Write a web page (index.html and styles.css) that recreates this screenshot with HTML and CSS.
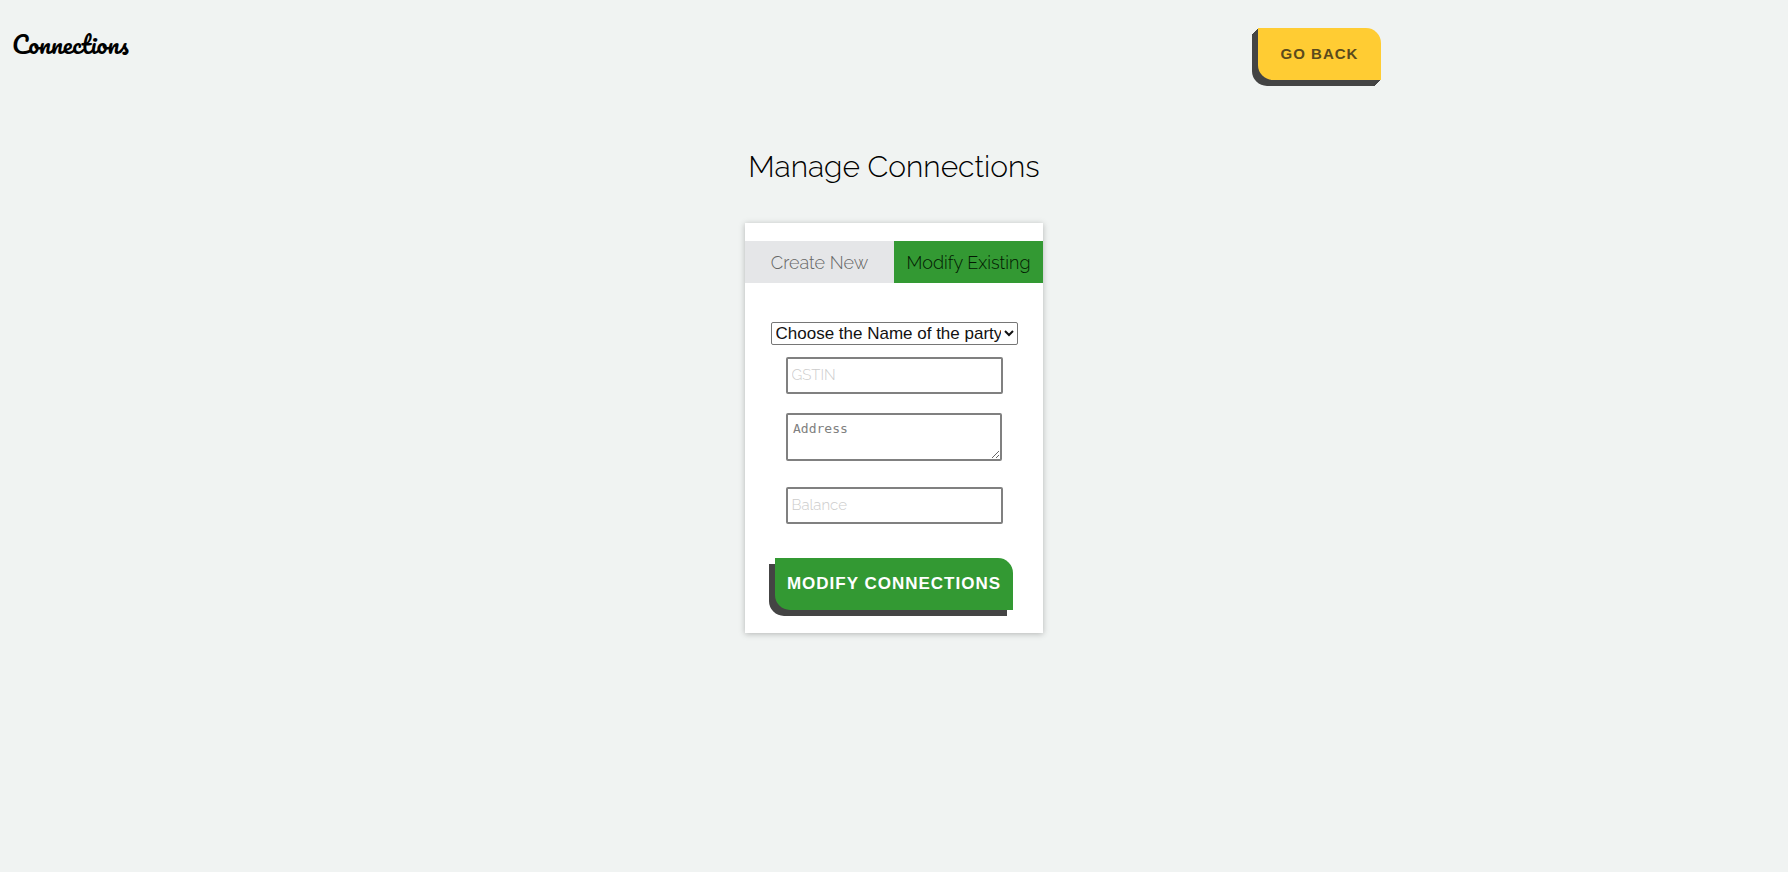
FILE: index.html
```html
<!DOCTYPE html>
<html lang="en">
<head>
<meta charset="utf-8">
<meta name="viewport" content="width=device-width, initial-scale=1">
<title>Connections</title>
<link rel="stylesheet" href="styles.css">
</head>
<body>
<header class="topbar">
  <div class="brand">Connections</div>
  <button class="btn btn-back" type="button">Go back</button>
</header>
<main class="content">
  <h1 class="title">Manage Connections</h1>
  <section class="card">
    <nav class="tabs">
      <a class="tab" href="#create">Create New</a>
      <a class="tab tab-active" href="#modify">Modify Existing</a>
    </nav>
    <form class="form" id="modify">
      <select class="party" aria-label="Name of the party">
        <option>Choose the Name of the party</option>
      </select>
      <input class="field" type="text" placeholder="GSTIN" aria-label="GSTIN">
      <textarea class="field-area" placeholder="Address" aria-label="Address"></textarea>
      <input class="field" type="text" placeholder="Balance" aria-label="Balance">
      <button class="btn btn-modify" type="button">Modify Connections</button>
    </form>
  </section>
</main>
</body>
</html>
```
FILE: styles.css
```css
* {
  box-sizing: border-box;
}

body {
  min-height: 100vh;
  margin: 0;
  background: #f0f3f2;
  color: #000;
  font-family: Raleway, Lato, sans-serif;
  font-weight: 300;
}

.topbar {
  display: grid;
  grid-template-columns: 70% 1fr;
  align-items: start;
  padding-top: 28px;
}

.brand {
  padding-left: 12px;
  font-family: Pacifico, Lato, cursive;
  font-size: 24px;
  font-weight: 400;
  line-height: 32px;
}

.btn {
  border: 0;
  border-radius: 0 15px 0 15px;
  height: 52px;
  font-family: "Liberation Sans", Arial, sans-serif;
  font-weight: 700;
  letter-spacing: 1px;
  text-transform: uppercase;
  white-space: nowrap;
  cursor: pointer;
}

.btn-back {
  justify-self: start;
  margin-left: 6px;
  padding: 0 23px 2px;
  background: #fc3;
  color: #5a4a1c;
  font-size: 15px;
  box-shadow: -1px 1px #444, -2px 2px #444, -3px 3px #444, -4px 4px #444, -5px 5px #444, -6px 6px #444;
}

.content {
  display: flex;
  flex-direction: column;
  align-items: center;
  padding: 64px 0 40px;
}

.title {
  margin: 0;
  padding-top: 1px;
  font-size: 30px;
  font-weight: 300;
  line-height: 44px;
}

.card {
  width: 298px;
  margin-top: 34px;
  padding: 18px 0 23px;
  background: #fff;
  box-shadow: 0 1px 6px rgba(0, 0, 0, 0.25);
}

.tabs {
  display: grid;
  grid-template-columns: 1fr 1fr;
}

.tab {
  padding-top: 2px;
  background: #e5e6e8;
  color: #666;
  font-size: 18px;
  line-height: 40px;
  text-align: center;
  text-decoration: none;
}

.tab-active {
  background: #393;
  color: #021802;
}

.form {
  display: flex;
  flex-direction: column;
  align-items: center;
  padding-top: 39px;
}

.party {
  width: 247px;
  height: 23px;
  padding: 0;
  border: 1px solid #767676;
  border-radius: 2px;
  background: #fff;
  color: #111;
  font-family: "Liberation Sans", Arial, sans-serif;
  font-size: 17px;
}

.field {
  width: 217px;
  height: 37px;
  padding: 0 4px 2px;
  border: 2px solid #808080;
  border-radius: 2px;
  background: #fff;
  font: inherit;
  font-size: 15px;
}

.party + .field {
  margin: 12px 0 19px;
}

.field::placeholder {
  color: #ccc;
}

.field-area {
  width: 216px;
  height: 48px;
  margin-bottom: 26px;
  padding: 6px 5px;
  border: 2px solid #808080;
  border-radius: 2px;
  background: #fff;
  font-family: "DejaVu Sans Mono", monospace;
  font-size: 13px;
  resize: both;
}

.field-area::placeholder {
  color: #808080;
}

.btn-modify {
  margin-top: 34px;
  padding: 0 12px;
  background: #393;
  color: #fff;
  font-size: 17px;
  box-shadow: -6px 6px #444;
}
```
